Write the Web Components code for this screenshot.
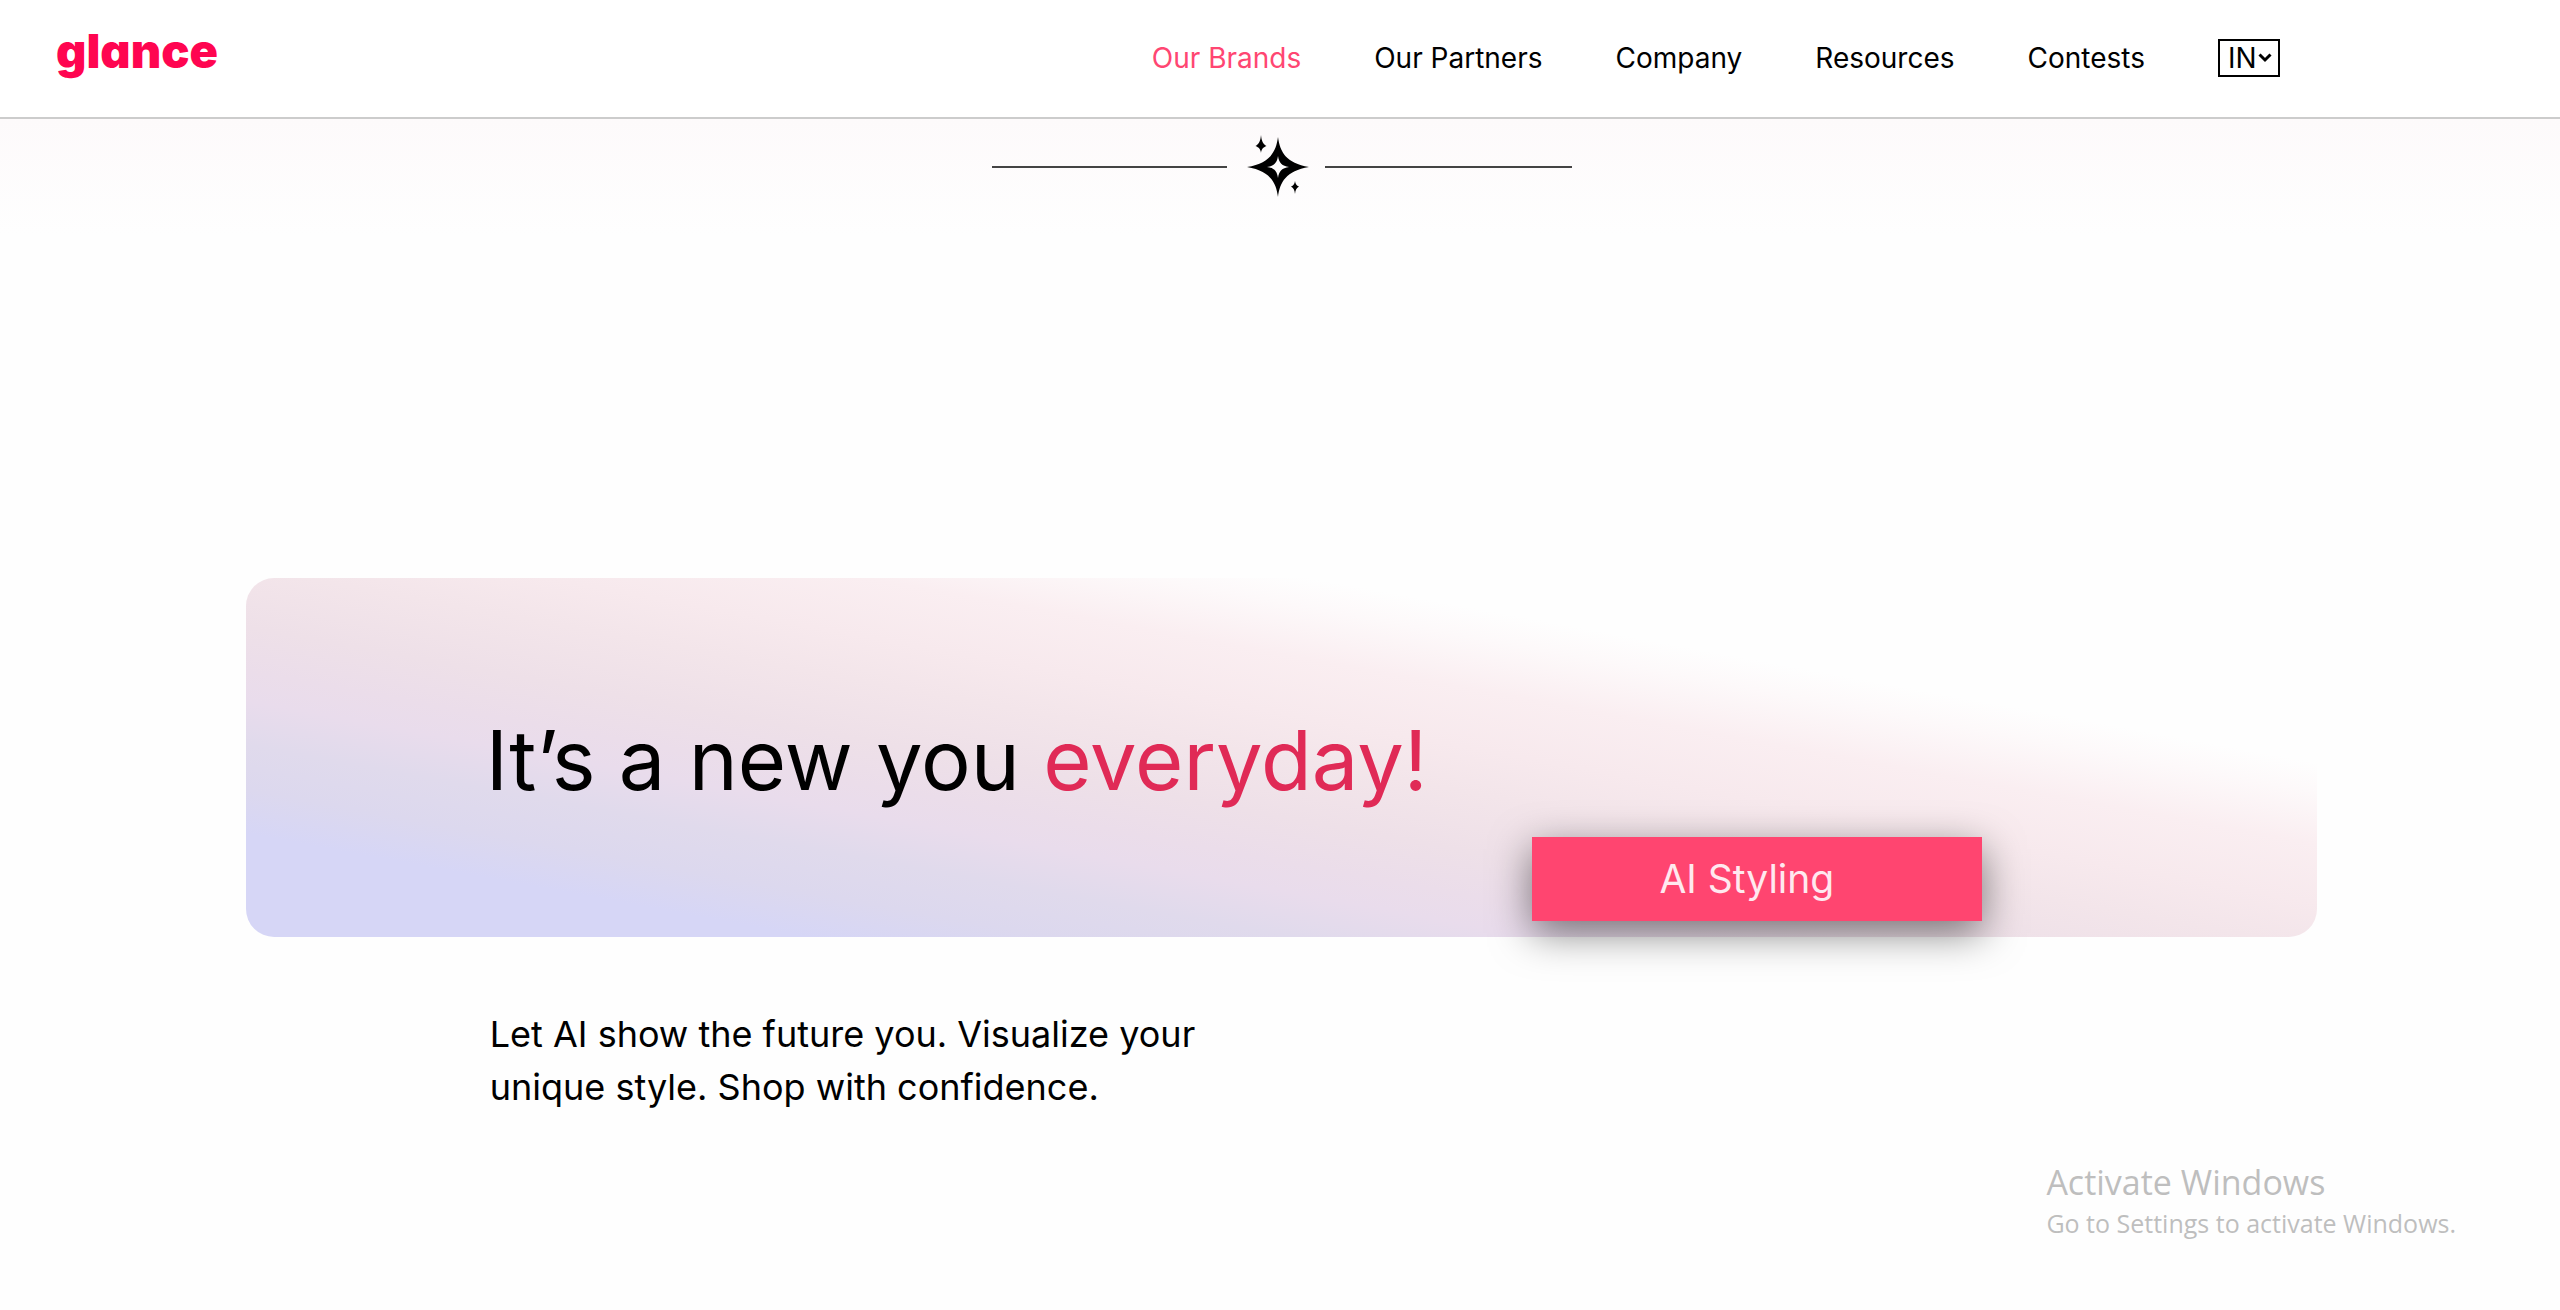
<!DOCTYPE html>
<html lang="en">
<head>
<meta charset="utf-8">
<title>Glance</title>
<style>
  body { margin: 0; min-height: 100vh; background: #fefefe; color: #000; font-family: Inter, "Liberation Sans", sans-serif; }
</style>
</head>
<body>
<glance-page>
  <glance-header slot="header">
    <glance-link active>Our Brands</glance-link>
    <glance-link>Our Partners</glance-link>
    <glance-link>Company</glance-link>
    <glance-link>Resources</glance-link>
    <glance-link>Contests</glance-link>
    <region-picker></region-picker>
  </glance-header>
  <sparkle-divider></sparkle-divider>
  <hero-banner>It’s a new you <span slot="accent">everyday!</span><span slot="action">AI Styling</span></hero-banner>
  <hero-copy>Let AI show the future you. Visualize your<br>unique style. Shop with confidence.</hero-copy>
  <system-notice slot="notice">Activate Windows<span slot="detail">Go to Settings to activate Windows.</span></system-notice>
</glance-page>
<script>
  const define = (name, html) => customElements.define(name, class extends HTMLElement {
    constructor() {
      super();
      this.attachShadow({ mode: "open" }).innerHTML = html;
    }
  });

  define("glance-page", `
    <style>
      :host { display: flex; flex-direction: column; min-height: 100vh; position: relative; }
      main { flex: 1; background: linear-gradient(#fdfafb, #fefefe 116px); }
      aside { position: absolute; right: 104px; bottom: 70px; }
    </style>
    <slot name="header"></slot>
    <main><slot></slot></main>
    <aside><slot name="notice"></slot></aside>`);

  define("glance-header", `
    <style>
      :host { display: block; background: #fff; border-bottom: 2px solid #ccc; }
      header { display: flex; align-items: center; justify-content: space-between; box-sizing: border-box; height: 117px; padding: 0 280px 2px 56px; }
      .logo { padding-bottom: 14px; color: #ff0550; font: 900 47px/64px Inter, sans-serif; font-feature-settings: "cv11"; text-decoration: none; }
      nav { display: flex; align-items: center; gap: 73px; }
    </style>
    <header>
      <a class="logo" href="#">glance</a>
      <nav aria-label="Main"><slot></slot></nav>
    </header>`);

  define("glance-link", `
    <style>
      :host { display: block; }
      a { color: #000; font-size: 28px; line-height: 40px; text-decoration: none; }
      :host([active]) a { color: #ff4672; }
    </style>
    <a href="#"><slot></slot></a>`);

  define("region-picker", `
    <style>
      :host { display: grid; align-items: center; }
      select, svg { grid-area: 1 / 1; }
      select { appearance: none; box-sizing: border-box; width: 62px; height: 38px; margin: 0; padding: 0 0 0 8px; border: 2px solid #000; border-radius: 0; background: #fff; color: #000; font: 400 28px/34px Inter, sans-serif; }
      svg { justify-self: end; margin-right: 8px; pointer-events: none; }
    </style>
    <select aria-label="Region"><option>IN</option></select>
    <svg width="14" height="10" viewBox="0 0 14 10" fill="none" stroke="#000" stroke-width="3"><path d="M1.5 1.5 7 7l5.500-5.500"/></svg>`);

  define("sparkle-divider", `
    <style>
      :host { display: flex; align-items: center; justify-content: center; gap: 16px; padding: 13px 0 15px 4px; }
      i { height: 2px; background: #444; }
      .left { width: 235px; margin-right: 4px; }
      .right { width: 247px; }
    </style>
    <i class="left"></i>
    <svg width="62" height="70" viewBox="0 0 62 70">
      <path fill-rule="evenodd" d="M31 5C33 20 39 31 62 35C39 39 33 50 31 65C29 50 23 39 0 35C23 31 29 20 31 5ZM31 24C30 31 27 34 20 35C27 36 30 39 31 46C32 39 35 36 42 35C35 34 32 31 31 24Z"/>
      <path d="M14 3C14.500 9 16 12 19.500 14C16 15.500 14.500 17 14 21C13.500 17 12 15.500 8.500 14C12 12 13.500 9 14 3ZM48 49C48.400 52 49.500 53.500 52 54.500C49.500 56 48.400 58 48 62C47.600 58 46.500 56 44 54.500C46.500 53.500 47.600 52 48 49Z"/>
    </svg>
    <i class="right"></i>`);

  define("hero-banner", `
    <style>
      :host { display: block; margin: 361px 9.5% 0 9.6%; }
      section { display: flex; flex-direction: column; box-sizing: border-box; min-height: 359px; padding: 122px 335px 16px 240px; border-radius: 28px;
        background: linear-gradient(190.4deg, #fefefe 25%, #fdf9fa 29%, #faeef1 36%, #f7e9ed 44%, #f3e5ea 50%, #eee0e8 58%, #ebddea 64%, #e9dcec 68%, #e0daec 74%, #dcd8ee 80%, #d6d6f6 86%); }
      h1 { margin: 0; font-size: 83px; line-height: 120px; font-weight: 400; white-space: nowrap; }
      .accent { color: #e02a56; }
      button { align-self: flex-end; width: 450px; height: 84px; margin-top: auto; padding: 0 20px 0 0; border: 0; background: #ff4570; color: #ffe9ef; font: 400 39px/48px Inter, sans-serif; box-shadow: 0 12px 40px rgba(0,0,0,.5); }
    </style>
    <section>
      <h1><slot></slot><span class="accent"><slot name="accent"></slot></span></h1>
      <button type="button"><slot name="action"></slot></button>
    </section>`);

  define("hero-copy", `
    <style>
      :host { display: block; margin: 71px 9.5% 0 9.6%; padding-left: 244px; }
      p { margin: 0; font-size: 36px; line-height: 53px; }
    </style>
    <p><slot></slot></p>`);

  define("system-notice", `
    <style>
      :host { display: block; color: #bebebe; font-family: "Open Sans", "Noto Sans", sans-serif; }
      p { margin: 0; font-size: 34px; line-height: 48px; }
      .detail { font-size: 25px; line-height: 34px; }
    </style>
    <p><slot></slot></p>
    <p class="detail"><slot name="detail"></slot></p>`);
</script>
</body>
</html>
